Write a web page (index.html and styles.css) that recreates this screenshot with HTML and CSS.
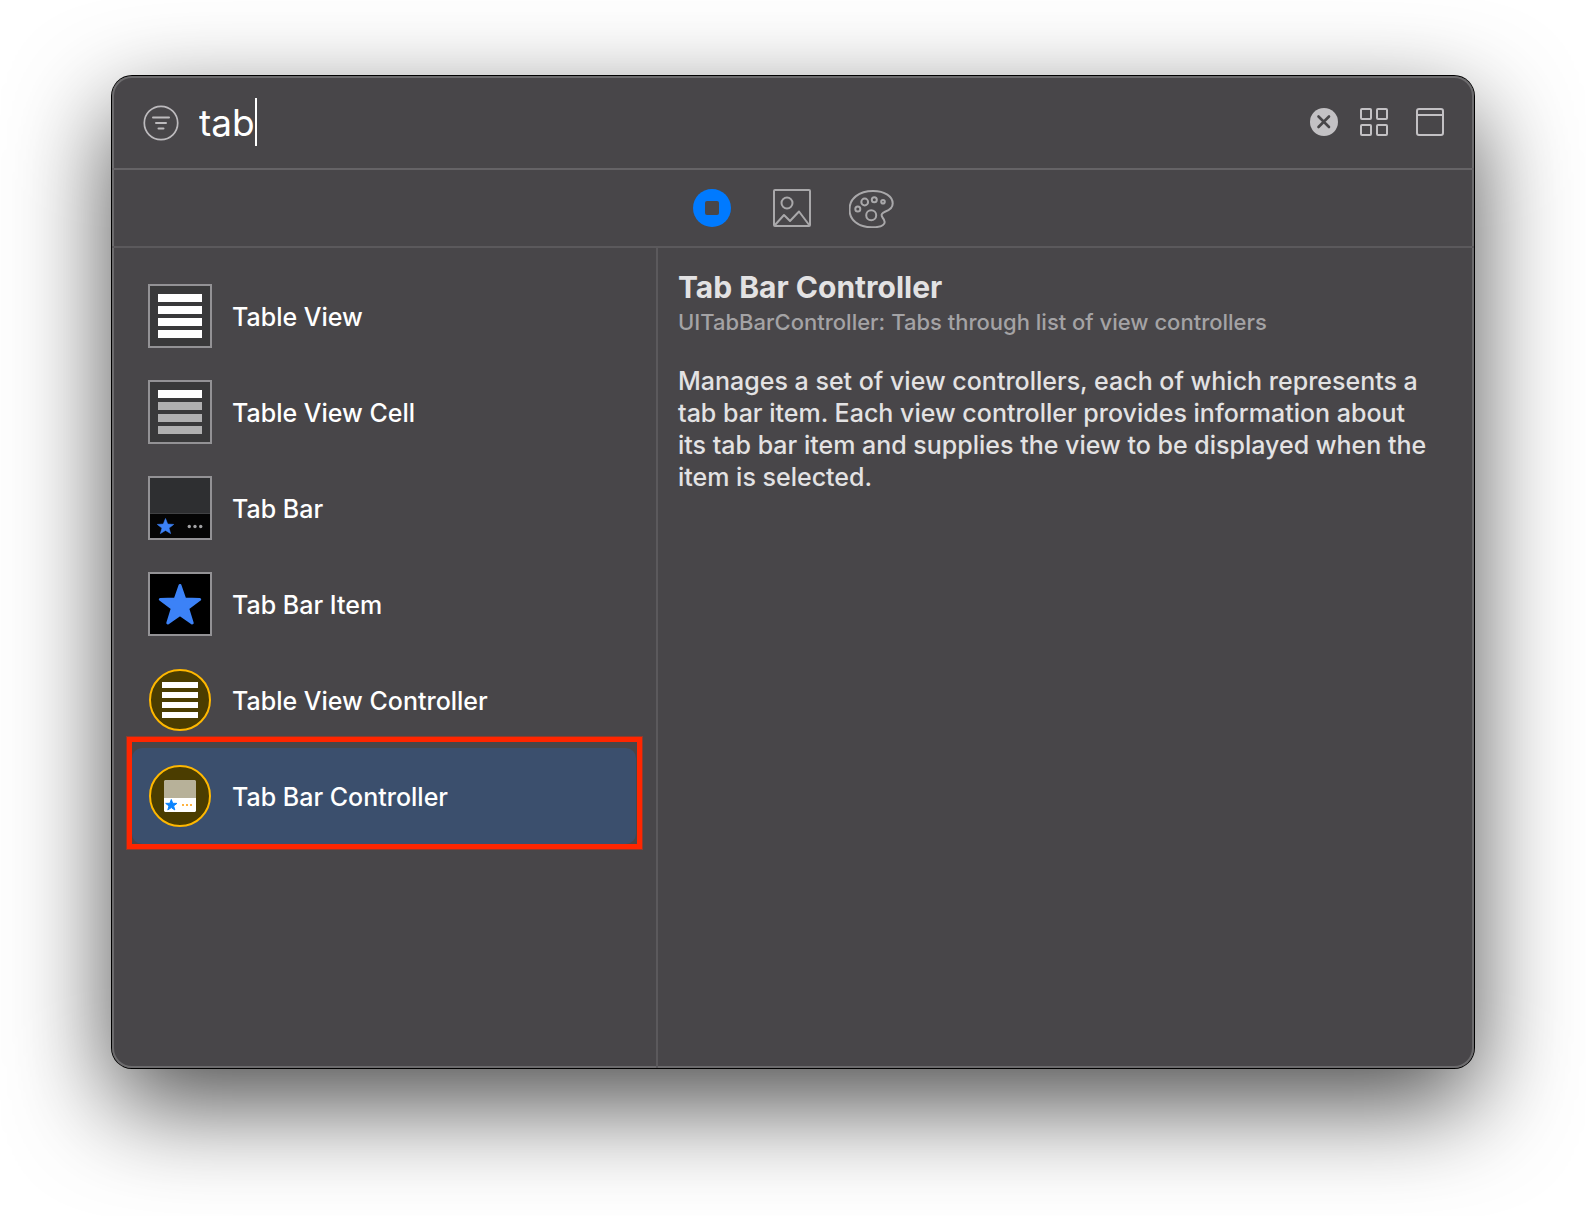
FILE: index.html
```html
<!DOCTYPE html>
<html lang="en">
<head>
<meta charset="utf-8">
<meta name="viewport" content="width=device-width, initial-scale=1">
<title>Library</title>
<link rel="stylesheet" href="styles.css">
</head>
<body>
<main class="library">
  <header class="search">
    <button class="icon-button" type="button" aria-label="Filter">
      <svg width="36" height="36" viewBox="0 0 36 36" fill="none" stroke="#bdbbbe" stroke-width="2" stroke-linecap="round" overflow="visible"><circle cx="18" cy="19" r="16.7" stroke-width="1.7"/><path d="M10 13.5h16M13 19h10M15.500 24.500h5"/></svg>
    </button>
    <div class="search-field">
      <input class="search-input" type="text" value="tab" size="3" aria-label="Search library">
      <span class="caret"></span>
    </div>
    <div class="search-actions">
      <button class="icon-button" type="button" aria-label="Clear">
        <svg width="28" height="28" viewBox="0 0 28 28"><circle cx="14" cy="14" r="14" fill="#c3c1c4"/><path d="M8.500 8.500l10.500 10.500M19 8.500L8.500 19" stroke="#484649" stroke-width="2.600" stroke-linecap="round"/></svg>
      </button>
      <div class="view-modes">
        <button class="icon-button" type="button" aria-label="Grid view">
          <svg width="28" height="28" viewBox="0 0 28 28" fill="none" stroke="#c3c1c4" stroke-width="2"><rect x="1" y="1" width="10" height="10" rx="1"/><rect x="17" y="1" width="10" height="10" rx="1"/><rect x="1" y="17" width="10" height="10" rx="1"/><rect x="17" y="17" width="10" height="10" rx="1"/></svg>
        </button>
        <button class="icon-button" type="button" aria-label="Toggle details">
          <svg width="28" height="28" viewBox="0 0 28 28" fill="none" stroke="#c3c1c4" stroke-width="2"><rect x="1" y="1" width="26" height="26" rx="2"/><path d="M1 7h26"/></svg>
        </button>
      </div>
    </div>
  </header>

  <nav class="kinds" aria-label="Library kind">
    <button class="icon-button" type="button" aria-label="Objects" aria-pressed="true">
      <svg width="48" height="40" viewBox="0 0 48 40"><circle cx="23" cy="20" r="19" fill="#007aff"/><rect x="16" y="13" width="14" height="14" rx="2" fill="#484649"/></svg>
    </button>
    <button class="icon-button" type="button" aria-label="Images">
      <svg width="48" height="40" viewBox="0 0 48 40" fill="none" stroke="#a9a8aa" stroke-width="2" stroke-linejoin="round"><rect x="5" y="2" width="36" height="36" rx="1"/><circle cx="18" cy="15" r="5.500"/><path d="M5.500 37.500L15 27l6 6 9-9.500L40.500 37.500"/></svg>
    </button>
    <button class="icon-button" type="button" aria-label="Colors">
      <svg width="48" height="40" viewBox="0 0 48 40" fill="none" stroke="#a9a8aa" stroke-width="2"><path d="M24 3C36 3 43.700 8.500 43.700 15.500C43.700 20 40.500 22 36.500 23.500C33 25 31.500 26.500 33.500 29.500C36 32.500 36.500 35.500 34 37C31.500 39 27 39.300 23 39.300C9 39.300 0.500 32 0.500 21.500C0.500 10.500 10 3 24 3Z"/><circle cx="15.700" cy="14" r="3.400"/><circle cx="25.300" cy="11.700" r="2.500"/><circle cx="34" cy="13.700" r="1.800"/><circle cx="8.800" cy="21" r="2.500"/><circle cx="22.200" cy="27.200" r="5"/></svg>
    </button>
  </nav>

  <div class="panes">
    <ul class="objects">
      <li>
        <button class="object" type="button">
          <svg class="thumb" viewBox="0 0 64 64"><rect x="1" y="1" width="62" height="62" fill="#39393a" stroke="#939295" stroke-width="2"/><path d="M10 10h44v8H10zM10 22h44v8H10zM10 34h44v8H10zM10 46h44v8H10z" fill="#fff"/></svg>
          <span class="object-name">Table View</span>
        </button>
      </li>
      <li>
        <button class="object" type="button">
          <svg class="thumb" viewBox="0 0 64 64"><rect x="1" y="1" width="62" height="62" fill="#39393a" stroke="#939295" stroke-width="2"/><path d="M10 10h44v8H10z" fill="#fff"/><path d="M10 22h44v8H10zM10 34h44v8H10zM10 46h44v8H10z" fill="#b0b0b0"/></svg>
          <span class="object-name">Table View Cell</span>
        </button>
      </li>
      <li>
        <button class="object" type="button">
          <svg class="thumb" viewBox="0 0 64 64"><rect x="1" y="1" width="62" height="62" fill="#2e2f31" stroke="#939295" stroke-width="2"/><path d="M2 38h60v24H2z" fill="#050505"/><path d="M2 37.500h60" stroke="#414244"/><path d="M17.500 42.500l2.200 5.600 6 .3-4.700 3.700 1.600 5.500-5.100-3.200-5.100 3.200 1.600-5.500-4.700-3.700 6-.3z" fill="#3c82f7" stroke="#3c82f7" stroke-linejoin="round" stroke-width=".6"/><g fill="#a2a2a4"><circle cx="41.300" cy="50.500" r="1.700"/><circle cx="47" cy="50.500" r="1.700"/><circle cx="52.700" cy="50.500" r="1.700"/></g></svg>
          <span class="object-name">Tab Bar</span>
        </button>
      </li>
      <li>
        <button class="object" type="button">
          <svg class="thumb" viewBox="0 0 64 64"><rect x="1" y="1" width="62" height="62" fill="#000" stroke="#939295" stroke-width="2"/><path d="M32 13.500l4.700 13.500 15 .4-12 9 4.500 14.500L32 42.500 19.800 50.900l4.500-14.500-12-9 15-.4z" fill="#3c82f7" stroke="#3c82f7" stroke-width="3" stroke-linejoin="round"/></svg>
          <span class="object-name">Tab Bar Item</span>
        </button>
      </li>
      <li>
        <button class="object" type="button">
          <svg class="thumb" viewBox="0 0 64 64"><circle cx="32" cy="32" r="30" fill="#4b3d00" stroke="#ffb800" stroke-width="2"/><path d="M14 14h36v6H14zM14 24h36v6H14zM14 34h36v6H14zM14 44h36v6H14z" fill="#fff"/></svg>
          <span class="object-name">Table View Controller</span>
        </button>
      </li>
      <li class="highlighted">
        <button class="object object-selected" type="button" aria-current="true">
          <svg class="thumb" viewBox="0 0 64 64"><circle cx="32" cy="32" r="30" fill="#4b3d00" stroke="#ffb800" stroke-width="2"/><path d="M17 16h30l1 1v17H16V17z" fill="#b7b199"/><path d="M16 34h32v13l-1 1H17l-1-1z" fill="#fff"/><path d="M23.300 35.500l1.400 3.800 4.200.1-3.300 2.500 1.200 4-3.500-2.300-3.500 2.300 1.200-4-3.300-2.500 4.200-.1z" fill="#0a84ff" stroke="#0a84ff"/><path d="M34 40h2v2h-2zM38 40h2v2h-2zM42 40h2v2h-2z" fill="#ffb340"/></svg>
          <span class="object-name">Tab Bar Controller</span>
        </button>
      </li>
    </ul>

    <section class="details">
      <h1 class="details-title">Tab Bar Controller</h1>
      <p class="details-class">UITabBarController: Tabs through list of view controllers</p>
      <p class="details-text">Manages a set of view controllers, each of which represents a tab bar item. Each view controller provides information about its tab bar item and supplies the view to be displayed when the item is selected.</p>
    </section>
  </div>
</main>
</body>
</html>
```
FILE: styles.css
```css
* {
  box-sizing: border-box;
}

body {
  display: flex;
  flex-direction: column;
  min-height: 100vh;
  margin: 0;
  padding: 76px 112px 148px;
  background: #fff;
  font-family: Inter, "Liberation Sans", sans-serif;
}

svg {
  display: block;
}

button,
input {
  margin: 0;
  padding: 0;
  border: 0;
  background: none;
  color: inherit;
  font: inherit;
}

.library {
  display: flex;
  flex: 1;
  flex-direction: column;
  border-radius: 20px;
  background: #484649;
  box-shadow:
    inset 0 0 0 2px #6c6b6d,
    0 0 0 1px #000,
    0 36px 100px rgba(0, 0, 0, 0.7);
  color: #fff;
}

.search {
  display: flex;
  align-items: center;
  gap: 20px;
  height: 94px;
  padding: 0 30px 0 31px;
  border-bottom: 2px solid #656366;
}

.search-field {
  display: flex;
  flex: 1;
  align-items: center;
}

.search-input {
  field-sizing: content;
  height: 48px;
  outline: 0;
  caret-color: transparent;
  font-size: 37px;
}

.caret {
  width: 2px;
  height: 48px;
  background: #fff;
}

.search-actions {
  display: flex;
  gap: 22px;
}

.view-modes {
  display: flex;
  gap: 28px;
}

.kinds {
  display: flex;
  align-items: center;
  justify-content: center;
  gap: 32px;
  height: 78px;
  border-bottom: 2px solid #5b595c;
}

.panes {
  display: grid;
  flex: 1;
  grid-template-columns: 546px 1fr;
}

.objects {
  margin: 0;
  padding: 20px;
  border-right: 2px solid #5b595c;
  list-style: none;
}

.object {
  display: flex;
  align-items: center;
  gap: 20px;
  width: 100%;
  height: 96px;
  padding: 0 16px;
  border-radius: 10px;
  font-size: 25px;
  font-weight: 500;
  text-align: left;
}

.object-name {
  padding-top: 2px;
}

.object-selected {
  background: #3b4f6d;
}

.thumb {
  flex: none;
  width: 64px;
  height: 64px;
}

.highlighted {
  position: relative;
}

.highlighted::after {
  position: absolute;
  inset: -11px -6px -5px -5px;
  border: 5px solid #ff2600;
  box-shadow: 0 0 0 1px rgba(255, 38, 0, 0.4);
  content: "";
  pointer-events: none;
}

.details {
  padding: 20px 38px 20px 20px;
  color: #e3e2e3;
}

.details-title {
  margin: 0;
  font-size: 30px;
  font-weight: 700;
  line-height: 38px;
}

.details-class {
  margin: 0 0 27px;
  color: #a4a3a5;
  font-size: 22px;
  font-weight: 500;
  line-height: 32px;
}

.details-text {
  margin: 0;
  font-size: 25px;
  font-weight: 500;
  line-height: 32px;
}
```
